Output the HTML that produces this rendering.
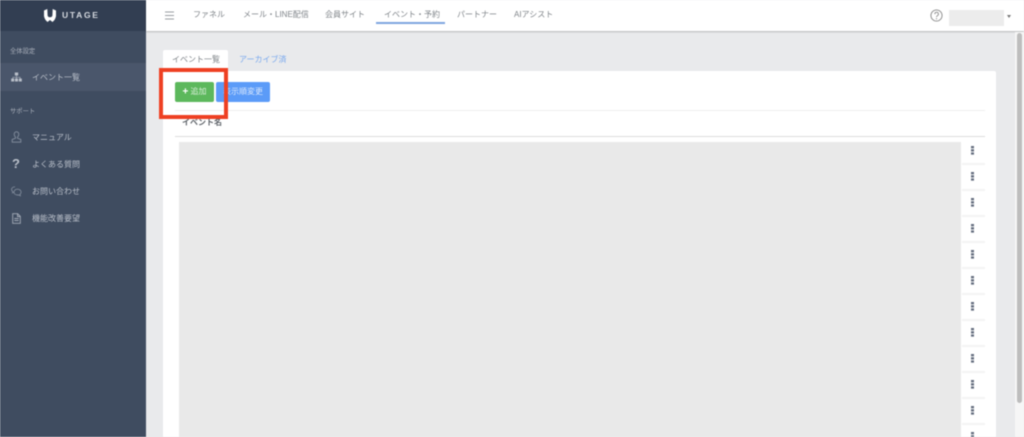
<!DOCTYPE html>
<html lang="ja">
<head>
<meta charset="utf-8">
<style>
html,body{margin:0;padding:0;width:1024px;height:437px;overflow:hidden;background:#e9eaec;font-family:"Liberation Sans","Noto Sans CJK JP",sans-serif;}
.a{position:absolute;white-space:nowrap;}
#root{position:absolute;left:0;top:0;width:1024px;height:437px;overflow:hidden;filter:blur(.4px);}
.nav{font-size:8px;color:#7f8489;top:9px;line-height:12px;}
.side{font-size:8px;color:#b9bfc9;line-height:12px;left:32px;}
.cap{font-size:6.3px;color:#aab0bb;line-height:10px;left:10px;}
.dots{position:absolute;left:971px;width:3px;height:9px;background-size:3px 3.2px;background-image:linear-gradient(#4a5568 70%,transparent 70%);opacity:.85;}
.rl{position:absolute;left:962px;width:23px;height:2px;background:#f3f3f3;}
</style>
</head>
<body>
<div id="root">
  <!-- Sidebar -->
  <div class="a" style="left:0;top:0;width:146px;height:437px;background:#3f4c60;"></div>
  <div class="a" style="left:0;top:0;width:146px;height:31px;background:#323e52;"></div>
  <div class="a" style="left:0;top:63px;width:146px;height:28px;background:#4a566b;"></div>

  <svg class="a" style="left:44px;top:9px" width="12" height="13" viewBox="0 0 12 13">
    <path d="M0 1.500 L3.300 0 L3.600 6.500 Q4 8.300 6 8.300 Q8 8.300 8.400 6.500 L8.700 0 L12 1.500 L12 7 Q11.500 10.500 8.500 13 L6 11 L3.500 13 Q.5 10.500 0 7 Z" fill="#ffffff"/>
  </svg>
  <div class="a" style="left:62px;top:9px;font-size:8.500px;line-height:13px;font-weight:bold;letter-spacing:1.700px;color:#d5d9df;">UTAGE</div>

  <div class="a cap" style="top:47px;">全体設定</div>
  <svg class="a" style="left:11px;top:72px" width="11" height="10" viewBox="0 0 11 10">
    <g fill="#b9bfc9"><rect x="3.800" y="0.500" width="3.400" height="3"/><rect x="0.200" y="6.500" width="3" height="3"/><rect x="4" y="6.500" width="3" height="3"/><rect x="7.800" y="6.500" width="3" height="3"/><path d="M5.200 3.500h.6v1.500h3.600v1.500h-.6v-1h-3v1h-.6v-1h-3v1h-.6v-1.500h3.600z"/></g>
  </svg>
  <div class="a side" style="top:72px;">イベント一覧</div>

  <div class="a cap" style="top:107px;">サポート</div>

  <svg class="a" style="left:11px;top:131px" width="11" height="12" viewBox="0 0 11 12">
    <path d="M5.500 .8a2.300 2.300 0 0 1 2.300 2.400c0 1.400-.8 2.500-1.300 3v1l3.300 1.300v2.600H1.200V8.500l3.300-1.300v-1C4 5.700 3.200 4.600 3.200 3.200A2.300 2.300 0 0 1 5.500 .8z" fill="none" stroke="#7f8a9a" stroke-width="1"/>
  </svg>
  <div class="a side" style="top:132px;">マニュアル</div>

  <div class="a" style="left:12px;top:156px;font-size:13px;line-height:15px;font-weight:bold;color:#b9bfc9;">?</div>
  <div class="a side" style="top:159px;">よくある質問</div>

  <svg class="a" style="left:11px;top:186px" width="11" height="11" viewBox="0 0 11 11">
    <g fill="none" stroke="#7f8a9a" stroke-width=".9"><path d="M4 .8C2 .8.600 2 .600 3.500c0 .9.500 1.600 1.200 2.100l-.3 1.200 1.400-.7"/><path d="M6.500 3.200c-2 0-3.500 1.200-3.500 2.900s1.500 2.900 3.500 2.900c.4 0 .8 0 1.100-.1l1.700.9-.3-1.600c.7-.5 1.100-1.200 1.100-2.100 0-1.700-1.600-2.900-3.600-2.900z"/></g>
  </svg>
  <div class="a side" style="top:186px;">お問い合わせ</div>

  <svg class="a" style="left:12px;top:213px" width="9" height="11" viewBox="0 0 9 11">
    <path d="M.7.7h5l2.600 2.600v7H.7zM5.500.7v2.800h2.800M2.300 5.500h4.400M2.300 7.500h4.400" fill="none" stroke="#a4abb7" stroke-width=".9"/>
  </svg>
  <div class="a side" style="top:213px;">機能改善要望</div>

  <!-- Header -->
  <div class="a" style="left:146px;top:0;width:878px;height:31px;background:#fff;box-shadow:0 1px 1.500px rgba(0,0,0,.22);"></div>
  <svg class="a" style="left:165px;top:11px" width="9" height="9" viewBox="0 0 9 9">
    <path d="M0 1h9M0 4.500h9M0 8h9" stroke="#9a9ea3" stroke-width="1"/>
  </svg>
  <div class="a nav" style="left:193px;">ファネル</div>
  <div class="a nav" style="left:243px;">メール・LINE配信</div>
  <div class="a nav" style="left:325px;">会員サイト</div>
  <div class="a nav" style="left:384px;">イベント・予約</div>
  <div class="a" style="left:376px;top:22px;width:69px;height:1.500px;background:#7ea6e0;"></div>
  <div class="a nav" style="left:457px;">パートナー</div>
  <div class="a nav" style="left:514px;">AIアシスト</div>

  <svg class="a" style="left:930px;top:9px" width="13" height="13" viewBox="0 0 13 13">
    <circle cx="6.500" cy="6.500" r="5.600" fill="none" stroke="#8c8c8c" stroke-width=".9"/>
    <path d="M4.800 5.100a1.800 1.800 0 1 1 2.700 1.500c-.7.400-1 .8-1 1.500" fill="none" stroke="#8c8c8c" stroke-width=".9"/>
    <circle cx="6.500" cy="9.700" r=".6" fill="#8c8c8c"/>
  </svg>
  <div class="a" style="left:949px;top:10px;width:55px;height:16px;background:#ececec;"></div>
  <div class="a" style="left:1007px;top:14.500px;width:0;height:0;border-left:2.500px solid transparent;border-right:2.500px solid transparent;border-top:3px solid #777;"></div>

  <!-- Scrollbar -->
  <div class="a" style="left:1015px;top:32px;width:9px;height:405px;background:#f6f6f6;"></div>
  <div class="a" style="left:1017px;top:33px;width:5px;height:370px;background:#bdbdbd;border-radius:3px;"></div>

  <!-- Tabs -->
  <div class="a" style="left:163px;top:50px;width:65px;height:22px;background:#fff;border-radius:2px 2px 0 0;"></div>
  <div class="a" style="left:172px;top:54px;font-size:8px;line-height:12px;color:#7f8489;">イベント一覧</div>
  <div class="a" style="left:239px;top:54px;font-size:8px;line-height:12px;color:#7aa9ee;">アーカイブ済</div>

  <!-- Card -->
  <div class="a" style="left:163px;top:71px;width:833px;height:366px;background:#fff;border-radius:0 2px 0 0;"></div>

  <!-- Buttons -->
  <div class="a" style="left:175px;top:82px;width:39px;height:20px;background:#5cb85c;border-radius:2px;color:#d9efd9;font-size:8px;line-height:20px;text-align:center;"><span style="font-size:10px;font-weight:bold;vertical-align:-.5px;color:#fff;">+</span> 追加</div>
  <div class="a" style="left:216px;top:82px;width:54px;height:20px;background:#5b9bf8;border-radius:2px;color:#d8e7fd;font-size:8px;line-height:20px;text-align:center;">表示順変更</div>

  <!-- Table head -->
  <div class="a" style="left:175px;top:110px;width:810px;height:1px;background:#eeeeee;"></div>
  <div class="a" style="left:182px;top:117px;font-size:8px;line-height:12px;font-weight:bold;color:#5f646a;">イベント名</div>
  <div class="a" style="left:175px;top:136px;width:810px;height:1px;background:#dcdcdc;"></div>

  <!-- Grey block -->
  <div class="a" style="left:179px;top:142px;width:782px;height:295px;background:#e9e9e9;"></div>

  <!-- Row dividers -->
  <div class="rl" style="top:163px"></div>
  <div class="rl" style="top:189px"></div>
  <div class="rl" style="top:215px"></div>
  <div class="rl" style="top:241px"></div>
  <div class="rl" style="top:267px"></div>
  <div class="rl" style="top:293px"></div>
  <div class="rl" style="top:319px"></div>
  <div class="rl" style="top:345px"></div>
  <div class="rl" style="top:371px"></div>
  <div class="rl" style="top:397px"></div>
  <div class="rl" style="top:423px"></div>

  <!-- Kebab menus -->
  <div class="dots" style="top:146px"></div>
  <div class="dots" style="top:172px"></div>
  <div class="dots" style="top:198px"></div>
  <div class="dots" style="top:224px"></div>
  <div class="dots" style="top:250px"></div>
  <div class="dots" style="top:276px"></div>
  <div class="dots" style="top:302px"></div>
  <div class="dots" style="top:328px"></div>
  <div class="dots" style="top:354px"></div>
  <div class="dots" style="top:380px"></div>
  <div class="dots" style="top:406px"></div>
  <div class="dots" style="top:432px"></div>

  <!-- Red annotation box -->
  <div class="a" style="left:159px;top:68px;width:69px;height:51px;box-sizing:border-box;border:4px solid #ee4023;"></div>
</div>
</body>
</html>
